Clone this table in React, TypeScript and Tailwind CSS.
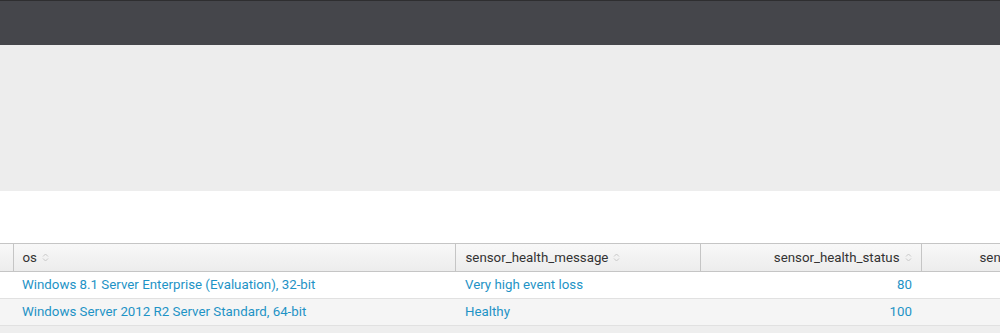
import React from "react";

const SortIcon = () => (
  <svg width="7" height="11" viewBox="0 0 7 11" className="inline-block ml-[5px] align-[-1px]">
    <path d="M1 4.5 L3.5 2 L6 4.5" fill="none" stroke="#c8c8c8" strokeWidth="1" />
    <path d="M1 6.5 L3.5 9 L6 6.5" fill="none" stroke="#c8c8c8" strokeWidth="1" />
  </svg>
);

export default function App() {
  const rows = [
    { os: "Windows 8.1 Server Enterprise (Evaluation), 32-bit", msg: "Very high event loss", status: "80" },
    { os: "Windows Server 2012 R2 Server Standard, 64-bit", msg: "Healthy", status: "100" },
  ];
  return (
    <div className="w-[1000px] h-[333px] overflow-hidden bg-[#eeeeee] text-[13.3px]" style={{ fontFamily: "Roboto, 'Liberation Sans', sans-serif" }}>
      <div className="h-[1px] bg-[#2e2e30]" />
      <div className="h-[44px] bg-[#45464b]" />
      <div className="h-[146px] bg-[#ededed]" />
      <div className="h-[52px] bg-white" />
      <div className="w-[1000px] overflow-hidden">
        <table className="border-collapse table-fixed w-[1100px]">
          <colgroup>
            <col className="w-[13px]" />
            <col className="w-[442px]" />
            <col className="w-[245px]" />
            <col className="w-[221px]" />
            <col className="w-[179px]" />
          </colgroup>
          <thead>
            <tr className="h-[28px] bg-gradient-to-b from-[#f8f8f8] to-[#ececec] text-[#333333]">
              <th className="border-t border-b border-[#c5c5c5] p-0" />
              <th className="border-t border-b border-l border-[#c5c5c5] text-left font-normal pl-[9px]">
                os<SortIcon />
              </th>
              <th className="border-t border-b border-l border-[#c5c5c5] text-left font-normal pl-[10px]">
                sensor_health_message<SortIcon />
              </th>
              <th className="border-t border-b border-l border-[#c5c5c5] text-right font-normal pr-[9px]">
                sensor_health_status<SortIcon />
              </th>
              <th className="border-t border-b border-l border-[#c5c5c5] text-left font-normal pl-[58px] whitespace-nowrap">
                sensor_version<SortIcon />
              </th>
            </tr>
          </thead>
          <tbody>
            {rows.map((r, i) => (
              <tr key={i} className={`h-[27px] border-b border-[#e1e1e1] text-[#1e93c6] ${i % 2 === 0 ? "bg-white" : "bg-[#f5f5f5]"}`}>
                <td className="p-0" />
                <td className="pl-[9px] whitespace-nowrap">{r.os}</td>
                <td className="pl-[10px] whitespace-nowrap">{r.msg}</td>
                <td className="pr-[9px] text-right">{r.status}</td>
                <td />
              </tr>
            ))}
          </tbody>
        </table>
      </div>
    </div>
  );
}
